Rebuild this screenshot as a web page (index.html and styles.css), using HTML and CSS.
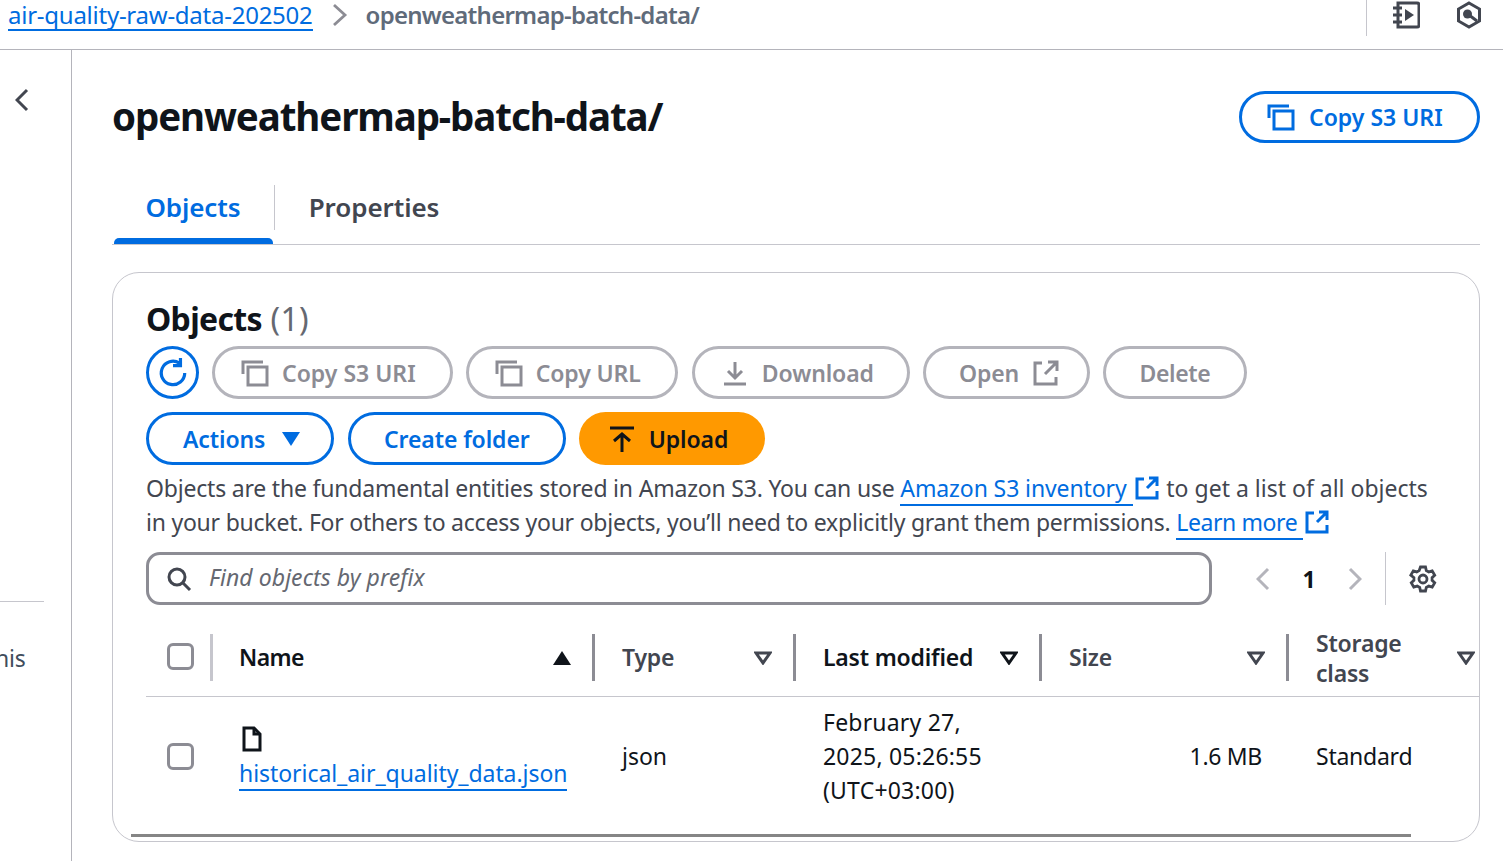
FILE: index.html
```html
<!DOCTYPE html>
<html lang="en">
<head>
  <meta charset="utf-8" />
  <title>openweathermap-batch-data/</title>
  <link rel="stylesheet" href="styles.css">
</head>
<body>
  <header class="topbar">
    <nav class="crumbs">
      <a class="link" href="#">air-quality-raw-data-202502</a>
      <svg class="crumb-sep" viewBox="0 0 16 24"><path d="M2 2l11 10L2 22"/></svg>
      <span class="crumb-current">openweathermap-batch-data/</span>
    </nav>
    <div class="top-tools">
      <svg class="tool-icon" viewBox="0 0 28 28"><path d="M6 2h19a2 2 0 0 1 2 2v20a2 2 0 0 1-2 2H6z"/><path d="M1 7h9M1 14h9M1 21h9"/><path class="solid" d="M13 8l9 6-9 6z"/></svg>
      <svg class="tool-icon" viewBox="0 0 28 28"><path d="M14 2l10.500 6v12L14 26 3.500 20V8z"/><circle class="solid" cx="12.500" cy="13" r="4.500"/><path d="M14 14l8 6"/></svg>
    </div>
  </header>

  <div class="layout">
    <aside class="sidenav">
      <svg class="nav-back" viewBox="0 0 14 24"><path d="M12 2L2 12l10 10"/></svg>
      <hr class="nav-rule">
      <div class="nav-text">his</div>
    </aside>

    <main class="content">
      <div class="page-head">
        <h1>openweathermap-batch-data/</h1>
        <button class="btn btn-primary-line">
          <svg class="ico" viewBox="0 0 28 28"><path d="M2 15V3h20"/><path d="M7 8h19v18H7z"/></svg>
          Copy S3 URI
        </button>
      </div>

      <div class="tabs">
        <div class="tab tab-active">Objects</div>
        <div class="tab">Properties</div>
      </div>

      <section class="card">
        <h2>Objects <span class="count">(1)</span></h2>

        <div class="actions">
          <button class="btn btn-primary-line btn-round">
            <svg class="ico-refresh" viewBox="0 0 30 30"><path d="M26 15a11 11 0 1 1-5-9.300"/><path d="M22 1v7h-7"/></svg>
          </button>
          <button class="btn btn-disabled btn-s3">
            <svg class="ico" viewBox="0 0 28 28"><path d="M2 15V3h20"/><path d="M7 8h19v18H7z"/></svg>
            Copy S3 URI
          </button>
          <button class="btn btn-disabled btn-url">
            <svg class="ico" viewBox="0 0 28 28"><path d="M2 15V3h20"/><path d="M7 8h19v18H7z"/></svg>
            Copy URL
          </button>
          <button class="btn btn-disabled">
            <svg class="ico" viewBox="0 0 28 28"><path d="M14 3v15M7 12l7 7 7-7M3 25h22"/></svg>
            Download
          </button>
          <button class="btn btn-disabled btn-open">
            Open
            <svg class="ico" viewBox="0 0 28 28"><path d="M10 4H3v21h21v-7"/><path d="M16 3h9v9M25 3L13 15"/></svg>
          </button>
          <button class="btn btn-disabled btn-delete">Delete</button>
        </div>

        <div class="actions actions-main">
          <button class="btn btn-primary-line btn-actions">
            Actions
            <svg class="caret" viewBox="0 0 18 14"><path d="M0 0h18L9 14z"/></svg>
          </button>
          <button class="btn btn-primary-line">Create folder</button>
          <button class="btn btn-upload">
            <svg class="ico" viewBox="0 0 28 28"><path d="M2 3h24"/><path d="M14 27V10M6 16l8-7 8 7"/></svg>
            Upload
          </button>
        </div>

        <p class="intro">
          Objects are the fundamental entities stored in Amazon S3. You can use
          <a class="link" href="#">Amazon S3 inventory </a><svg class="ext" viewBox="0 0 24 24"><path d="M9 3H2v19h20v-7"/><path d="M14 2h8v8M22 2L12 12"/></svg>
          <span class="intro-wide">to get a list of all objects</span>
          <span class="intro-tight">in your bucket. For others to access your objects, you’ll need to explicitly grant them permissions.</span>
          <a class="link link-more" href="#">Learn more </a><svg class="ext" viewBox="0 0 24 24"><path d="M9 3H2v19h20v-7"/><path d="M14 2h8v8M22 2L12 12"/></svg>
        </p>

        <div class="filter-row">
          <div class="search">
            <svg class="search-ico" viewBox="0 0 26 26"><circle cx="11" cy="11" r="8"/><path d="M17 17l7 7"/></svg>
            <span>Find objects by prefix</span>
          </div>
          <div class="pager">
            <svg class="pager-arrow" viewBox="0 0 14 24"><path d="M12 2L2 12l10 10"/></svg>
            <span class="page-num">1</span>
            <svg class="pager-arrow" viewBox="0 0 14 24"><path d="M2 2l10 10L2 22"/></svg>
          </div>
          <div class="settings">
            <svg class="gear" viewBox="0 0 28 28"><path d="M11.500 2h5l.8 3.500 2.500 1.400 3.400-1 2.500 4.300-2.600 2.400v2.800l2.600 2.400-2.500 4.300-3.400-1-2.500 1.400-.8 3.500h-5l-.8-3.500-2.500-1.400-3.400 1-2.500-4.300 2.600-2.400v-2.800L1.800 10.200l2.500-4.300 3.400 1 2.500-1.400z"/><circle cx="14" cy="14" r="4"/></svg>
          </div>
        </div>

        <div class="table">
          <div class="row row-head">
            <div class="cell cell-check"><span class="checkbox"></span></div>
            <div class="cell th th-sorted"><span>Name</span><svg class="sort" viewBox="0 0 18 14"><path class="filled" d="M9 0l9 14H0z"/></svg></div>
            <div class="cell th"><span>Type</span><svg class="sort" viewBox="0 0 18 14"><path d="M2 2h14L9 12z"/></svg></div>
            <div class="cell th th-dark"><span>Last modified</span><svg class="sort" viewBox="0 0 18 14"><path d="M2 2h14L9 12z"/></svg></div>
            <div class="cell th"><span>Size</span><svg class="sort" viewBox="0 0 18 14"><path d="M2 2h14L9 12z"/></svg></div>
            <div class="cell th th-last"><span>Storage<br>class</span><svg class="sort" viewBox="0 0 18 14"><path d="M2 2h14L9 12z"/></svg></div>
          </div>
          <div class="row row-body">
            <div class="cell cell-check"><span class="checkbox"></span></div>
            <div class="cell td-name">
              <svg class="file" viewBox="0 0 20 26"><path d="M2 2h10l6 6v16H2z"/><path d="M12 2v6h6"/></svg>
              <a class="link" href="#">historical_air_quality_data.json</a>
            </div>
            <div class="cell td">json</div>
            <div class="cell td td-date">February 27,<br>2025, 05:26:55<br>(UTC+03:00)</div>
            <div class="cell td td-size">1.6 MB</div>
            <div class="cell td td-class">Standard</div>
          </div>
        </div>
        <div class="scrollbar"></div>
      </section>
    </main>
  </div>
</body>
</html>
```

FILE: styles.css
```css
html, body {
  margin: 0;
  padding: 0;
  height: 861px;
  overflow: hidden;
  background: #fff;
}
body {
  font-family: "Noto Sans", sans-serif;
  font-size: 23px;
  letter-spacing: -0.2px;
  color: #0f141a;
}
svg {
  fill: none;
  stroke: currentColor;
}
.link {
  color: #006ce0;
  text-decoration: none;
  border-bottom: 2px solid #006ce0;
}

/* top bar */
.topbar {
  height: 49px;
  border-bottom: 1px solid #b4b4bb;
  display: flex;
  justify-content: space-between;
  padding-left: 8px;
}
.crumbs {
  display: flex;
  align-items: flex-start;
  gap: 19px;
  line-height: 29px;
  height: 31px;
  font-size: 24px;
  letter-spacing: -0.25px;
}
.crumb-sep {
  width: 16px;
  height: 24px;
  color: #8c8c94;
  stroke-width: 2.8;
  margin-top: 3px;
}
.crumb-current {
  color: #5f6b7a;
  font-weight: 600;
  letter-spacing: -0.74px;
  margin-left: -1px;
}
.top-tools {
  display: flex;
  gap: 35px;
  height: 36px;
  padding: 0 20px 0 25px;
  border-left: 1px solid #c6c6cd;
}
.tool-icon {
  width: 28px;
  height: 28px;
  color: #424650;
  stroke-width: 3;
  margin-top: 1px;
}
.solid {
  fill: currentColor;
  stroke: none;
}

/* left nav */
.layout {
  display: flex;
  height: 811px;
}
.sidenav {
  width: 71px;
  flex: none;
  border-right: 1px solid #b4b4bb;
  overflow: hidden;
}
.nav-back {
  display: block;
  width: 14px;
  height: 24px;
  margin: 38px 0 0 15px;
  color: #424650;
  stroke-width: 3;
}
.nav-rule {
  width: 44px;
  margin: 489px 0 0;
  border: 0;
  border-top: 1px solid #c6c6cd;
}
.nav-text {
  margin: 39px 0 0 -5px;
  line-height: 34px;
  color: #414d5c;
}

/* main */
.content {
  flex: 1;
  padding: 0 23px 0 40px;
  min-width: 0;
}
.page-head {
  display: flex;
  justify-content: space-between;
  align-items: center;
  height: 52px;
  margin-top: 41px;
}
h1 {
  margin: -2px 0 0;
  font-size: 38.5px;
  font-weight: 700;
  letter-spacing: -1.1px;
}
.tabs {
  display: flex;
  margin-top: 39px;
  height: 62px;
  border-bottom: 1px solid #c6c6cd;
}
.tab {
  font-size: 26px;
  font-weight: 600;
  letter-spacing: -0.1px;
  color: #424650;
  width: 162px;
  text-align: center;
  line-height: 50px;
  height: 48px;
}
.tab + .tab {
  border-left: 1px solid #c6c6cd;
  width: 198px;
  height: 45px;
  margin-top: 3px;
  line-height: 44px;
}
.tab-active {
  color: #006ce0;
  position: relative;
}
.tab-active::after {
  content: "";
  position: absolute;
  left: 2px;
  width: 159px;
  top: 56px;
  height: 6px;
  background: #006ce0;
  border-radius: 5px 5px 0 0;
}

/* card */
.card {
  margin-top: 27px;
  height: 570px;
  box-sizing: border-box;
  border: 1px solid #c6c6cd;
  border-radius: 27px;
  padding: 27px 0 0 33px;
  position: relative;
  overflow: hidden;
}
h2 {
  margin: 0 0 8px;
  font-size: 32px;
  line-height: 38px;
  font-weight: 700;
  letter-spacing: -0.7px;
}
.count {
  font-weight: 400;
  letter-spacing: 0.4px;
  margin-left: 1px;
  color: #656871;
}
.actions {
  display: flex;
  gap: 13px;
  margin-bottom: 13px;
}
.actions-main {
  gap: 14px;
}

/* buttons */
.btn {
  height: 53px;
  border-radius: 27px;
  background: #fff;
  font: inherit;
  font-weight: 600;
  font-size: 23px;
  letter-spacing: -0.1px;
  display: inline-flex;
  align-items: center;
  justify-content: center;
  gap: 13px;
  padding: 0 33px 0 26px;
  box-sizing: border-box;
  white-space: nowrap;
}
.btn-primary-line {
  border: 3px solid #006ce0;
  color: #006ce0;
  padding: 0 33px;
}
.page-head .btn {
  justify-content: flex-start;
  letter-spacing: 0;
  padding: 0 0 0 25px;
  gap: 14px;
  width: 241px;
  height: 52px;
}
.btn-disabled {
  border: 3px solid #b4b4bb;
  color: #8c8c94;
}
.btn-round {
  width: 53px;
  padding: 0;
}
.btn-s3 {
  letter-spacing: 0;
  padding-right: 34px;
}
.btn-url {
  padding-right: 34px;
  margin-right: 1px;
}
.btn-open {
  padding: 0 27px 0 33px;
}
.btn-delete {
  padding: 0 33.500px;
  letter-spacing: -0.4px;
}
.btn-upload {
  border: 0;
  background: #ff9900;
  color: #0f141a;
  padding: 0 37px 0 29px;
  gap: 13px;
  margin-left: -1px;
}
.btn-actions {
  width: 188px;
  justify-content: flex-start;
  padding: 0 0 0 34px;
  gap: 17px;
}
.ico {
  width: 28px;
  height: 28px;
  stroke-width: 3;
  flex: none;
}
.ico-refresh {
  width: 32px;
  height: 32px;
  stroke-width: 3;
}
.caret {
  width: 18px;
  height: 14px;
  fill: currentColor;
  stroke: none;
}

/* intro */
.intro {
  margin: -7px 0 0;
  width: 1290px;
  line-height: 34px;
  color: #424650;
}
.intro .link {
  letter-spacing: -0.1px;
}
.intro .link-more {
  letter-spacing: -0.4px;
}
.intro-wide {
  letter-spacing: 0;
}
.intro-tight {
  letter-spacing: -0.23px;
}
.ext {
  width: 24px;
  height: 24px;
  stroke-width: 3;
  vertical-align: -3px;
  color: #006ce0;
  margin: 0 2px 0 2px;
}

/* search + pager */
.filter-row {
  display: flex;
  margin-top: 13px;
  height: 53px;
}
.search {
  width: 1066px;
  box-sizing: border-box;
  border: 3px solid #8c8c94;
  border-radius: 14px;
  display: flex;
  align-items: center;
  gap: 17px;
  padding-left: 17px;
  font-style: italic;
  letter-spacing: 0.05px;
  color: #656871;
}
.search span {
  margin-top: -4px;
}
.search-ico {
  width: 26px;
  height: 26px;
  stroke-width: 3;
  color: #424650;
}
.pager {
  display: flex;
  align-items: center;
  width: 174px;
  box-sizing: border-box;
  padding-left: 44px;
  gap: 32.500px;
  border-right: 1px solid #c6c6cd;
}
.pager-arrow {
  width: 14px;
  height: 24px;
  color: #b4b4bb;
  stroke-width: 3;
}
.page-num {
  font-weight: 700;
}
.settings {
  padding: 13px 0 0 23px;
}
.gear {
  width: 28px;
  height: 28px;
  color: #424650;
  stroke-width: 2.8;
}

/* table */
.table {
  margin-top: 29px;
}
.row {
  display: grid;
  grid-template-columns: 67px 382px 201px 246px 247px 1fr;
}
.row-head {
  height: 62px;
  border-bottom: 1px solid #c6c6cd;
  align-items: start;
}
.cell {
  min-width: 0;
}
.cell-check {
  padding-left: 21px;
}
.row-head .cell-check {
  height: 47px;
  padding-top: 9px;
  box-sizing: border-box;
  border-right: 3px solid #c6c6cd;
}
.checkbox {
  display: block;
  width: 27px;
  height: 27px;
  box-sizing: border-box;
  border: 3px solid #8c8c94;
  border-radius: 6px;
}
.th {
  height: 47px;
  display: flex;
  justify-content: space-between;
  align-items: center;
  box-sizing: border-box;
  padding: 0 21px 0 27px;
  font-weight: 600;
  color: #424650;
  border-right: 3px solid #8c8c94;
  line-height: 30px;
}
.th span {
  margin-top: -2px;
}
.th-sorted {
  color: #0f141a;
  letter-spacing: -0.6px;
  padding-left: 26px;
}
.th-dark {
  color: #0f141a;
}
.th-last {
  border-right: 0;
  padding-right: 4px;
}
.th-last span {
  margin-top: 0;
}
.sort {
  width: 18px;
  height: 14px;
  stroke-width: 3;
  flex: none;
}
.filled {
  fill: currentColor;
  stroke: none;
}
.row-body {
  height: 118px;
  align-items: center;
}
.td {
  padding-left: 27px;
  line-height: 34px;
  color: #0f141a;
  letter-spacing: 0;
}
.td-date {
  letter-spacing: 0.2px;
}
.td-size {
  text-align: right;
  padding-right: 27px;
  letter-spacing: -0.3px;
}
.td-class {
  letter-spacing: -0.25px;
}
.td-name {
  padding-left: 26px;
  margin-top: 3px;
  letter-spacing: -0.06px;
}
.file {
  display: block;
  width: 22px;
  height: 26px;
  stroke-width: 3;
  margin: 0 0 5px 2px;
}
.scrollbar {
  position: absolute;
  left: 18px;
  bottom: 4px;
  width: 1280px;
  height: 3px;
  background: #858585;
}
```
